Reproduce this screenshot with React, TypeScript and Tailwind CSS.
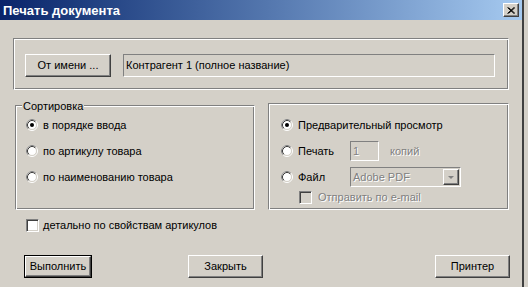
import React from "react";

const etched =
  "border border-t-[#808080] border-l-[#808080] border-r-white border-b-white shadow-[inset_1px_1px_0_#fff,inset_-1px_-1px_0_#808080]";
const raised =
  "border border-t-white border-l-white border-r-[#404040] border-b-[#404040] shadow-[inset_-1px_-1px_0_#808080] bg-[#d4d0c8]";
const sunken = "border border-t-[#808080] border-l-[#808080] border-r-white border-b-white";
const disabledText = "text-[#808080] [text-shadow:1px_1px_0_#fff]";

function Radio({ checked }: { checked?: boolean }) {
  return (
    <svg width="12" height="12" viewBox="0 0 12 12" className="shrink-0">
      <circle cx="6" cy="6" r="5.5" fill="none" stroke="#fff" />
      <path d="M2.11 9.89 A5.5 5.5 0 0 1 9.89 2.11" fill="none" stroke="#808080" />
      <circle cx="6" cy="6" r="4.5" fill="#fff" stroke="#d4d0c8" />
      <path d="M2.82 9.18 A4.5 4.5 0 0 1 9.18 2.82" fill="none" stroke="#404040" />
      {checked && <circle cx="6" cy="6" r="2" fill="#000" />}
    </svg>
  );
}

function Check({ disabled }: { disabled?: boolean }) {
  return (
    <div
      className={`w-[13px] h-[13px] shrink-0 ${sunken} shadow-[inset_1px_1px_0_#404040,inset_-1px_-1px_0_#d4d0c8] ${
        disabled ? "bg-[#d4d0c8]" : "bg-white"
      }`}
    />
  );
}

function Button({ label, width, isDefault }: { label: string; width: number; isDefault?: boolean }) {
  if (isDefault) {
    return (
      <div className="border border-black" style={{ width }}>
        <div className={`${raised} h-[21px] flex items-center justify-center`}>{label}</div>
      </div>
    );
  }
  return (
    <div className={`${raised} h-[23px] flex items-center justify-center`} style={{ width }}>
      {label}
    </div>
  );
}

export default function App() {
  return (
    <div className="w-[528px] h-[287px] bg-[#d4d0c8] flex font-['Liberation_Sans',Arial,sans-serif] text-[11px] text-black overflow-hidden">
      <div className="w-[522px] flex flex-col">
        {/* title bar */}
        <div className="h-[20px] shrink-0 flex items-center justify-between bg-gradient-to-r from-[#0a246a] to-[#a6caf0] pl-[3px] pr-[3px]">
          <span className="text-white font-bold text-[13px] leading-none">Печать документа</span>
          <div className={`${raised} w-[16px] h-[14px] flex items-center justify-center`}>
            <svg width="8" height="7" viewBox="0 0 8 7">
              <path d="M0.5 0.5 L7 6.5 M1.5 0.5 L8 6.5 M7 0.5 L0.5 6.5 M8 0.5 L1.5 6.5" stroke="#000" strokeWidth="1" />
            </svg>
          </div>
        </div>

        <div className="pl-[13px] pt-[18px] flex flex-col">
          {/* counterparty */}
          <div className={`${etched} w-[496px] h-[52px] pt-[15px] pl-[11px] flex items-start gap-[12px]`}>
            <Button label="От имени ..." width={86} />
            <div className={`${sunken} w-[372px] h-[23px] pl-[2px] pt-[2px]`}>Контрагент 1 (полное название)</div>
          </div>

          {/* groups */}
          <div className="flex items-start mt-[13px]">
            <div className={`${etched} relative ml-[2px] mt-[2px] w-[240px] h-[105px] pt-[6px] pl-[10px] flex flex-col`}>
              <span className="absolute -top-[8px] left-[6px] px-[1px] bg-[#d4d0c8]">Сортировка</span>
              <div className="h-[26px] flex items-center gap-[5px]">
                <Radio checked />
                <span>в порядке ввода</span>
              </div>
              <div className="h-[26px] flex items-center gap-[5px]">
                <Radio />
                <span>по артикулу товара</span>
              </div>
              <div className="h-[26px] flex items-center gap-[5px]">
                <Radio />
                <span>по наименованию товара</span>
              </div>
            </div>

            <div className={`${etched} ml-[13px] w-[241px] h-[107px] pt-[8px] pl-[12px] flex flex-col`}>
              <div className="h-[26px] flex items-center gap-[5px]">
                <Radio checked />
                <span>Предварительный просмотр</span>
              </div>
              <div className="h-[26px] flex items-center gap-[5px]">
                <Radio />
                <span className="w-[47px]">Печать</span>
                <div className={`${sunken} w-[29px] h-[20px] pl-[2px] flex items-center ${disabledText}`}>1</div>
                <span className={`ml-[6px] ${disabledText}`}>копий</span>
              </div>
              <div className="h-[26px] flex items-center gap-[5px]">
                <Radio />
                <span className="w-[47px]">Файл</span>
                <div className={`${sunken} w-[111px] h-[20px] pl-[2px] flex items-center justify-between`}>
                  <span className={disabledText}>Adobe PDF</span>
                  <div className={`${raised} w-[16px] h-[16px] mr-[1px] flex items-center justify-center`}>
                    <svg width="8" height="5" viewBox="0 0 8 5">
                      <path d="M1 1 L7 1 L4 4 Z" fill="#808080" />
                    </svg>
                  </div>
                </div>
              </div>
              <div className="h-[13px] mt-[1px] pl-[18px] flex items-center gap-[6px]">
                <Check disabled />
                <span className={disabledText}>Отправить по e-mail</span>
              </div>
            </div>
          </div>

          {/* details */}
          <div className="mt-[9px] ml-[13px] flex items-center gap-[4px] h-[13px]">
            <Check />
            <span>детально по свойствам артикулов</span>
          </div>

          {/* buttons */}
          <div className="mt-[23px] flex">
            <div className="ml-[11px]">
              <Button label="Выполнить" width={68} isDefault />
            </div>
            <div className="ml-[96px]">
              <Button label="Закрыть" width={75} />
            </div>
            <div className="ml-[172px]">
              <Button label="Принтер" width={75} />
            </div>
          </div>
        </div>
      </div>
      <div className="w-[2px] bg-[#404040]" />
    </div>
  );
}
